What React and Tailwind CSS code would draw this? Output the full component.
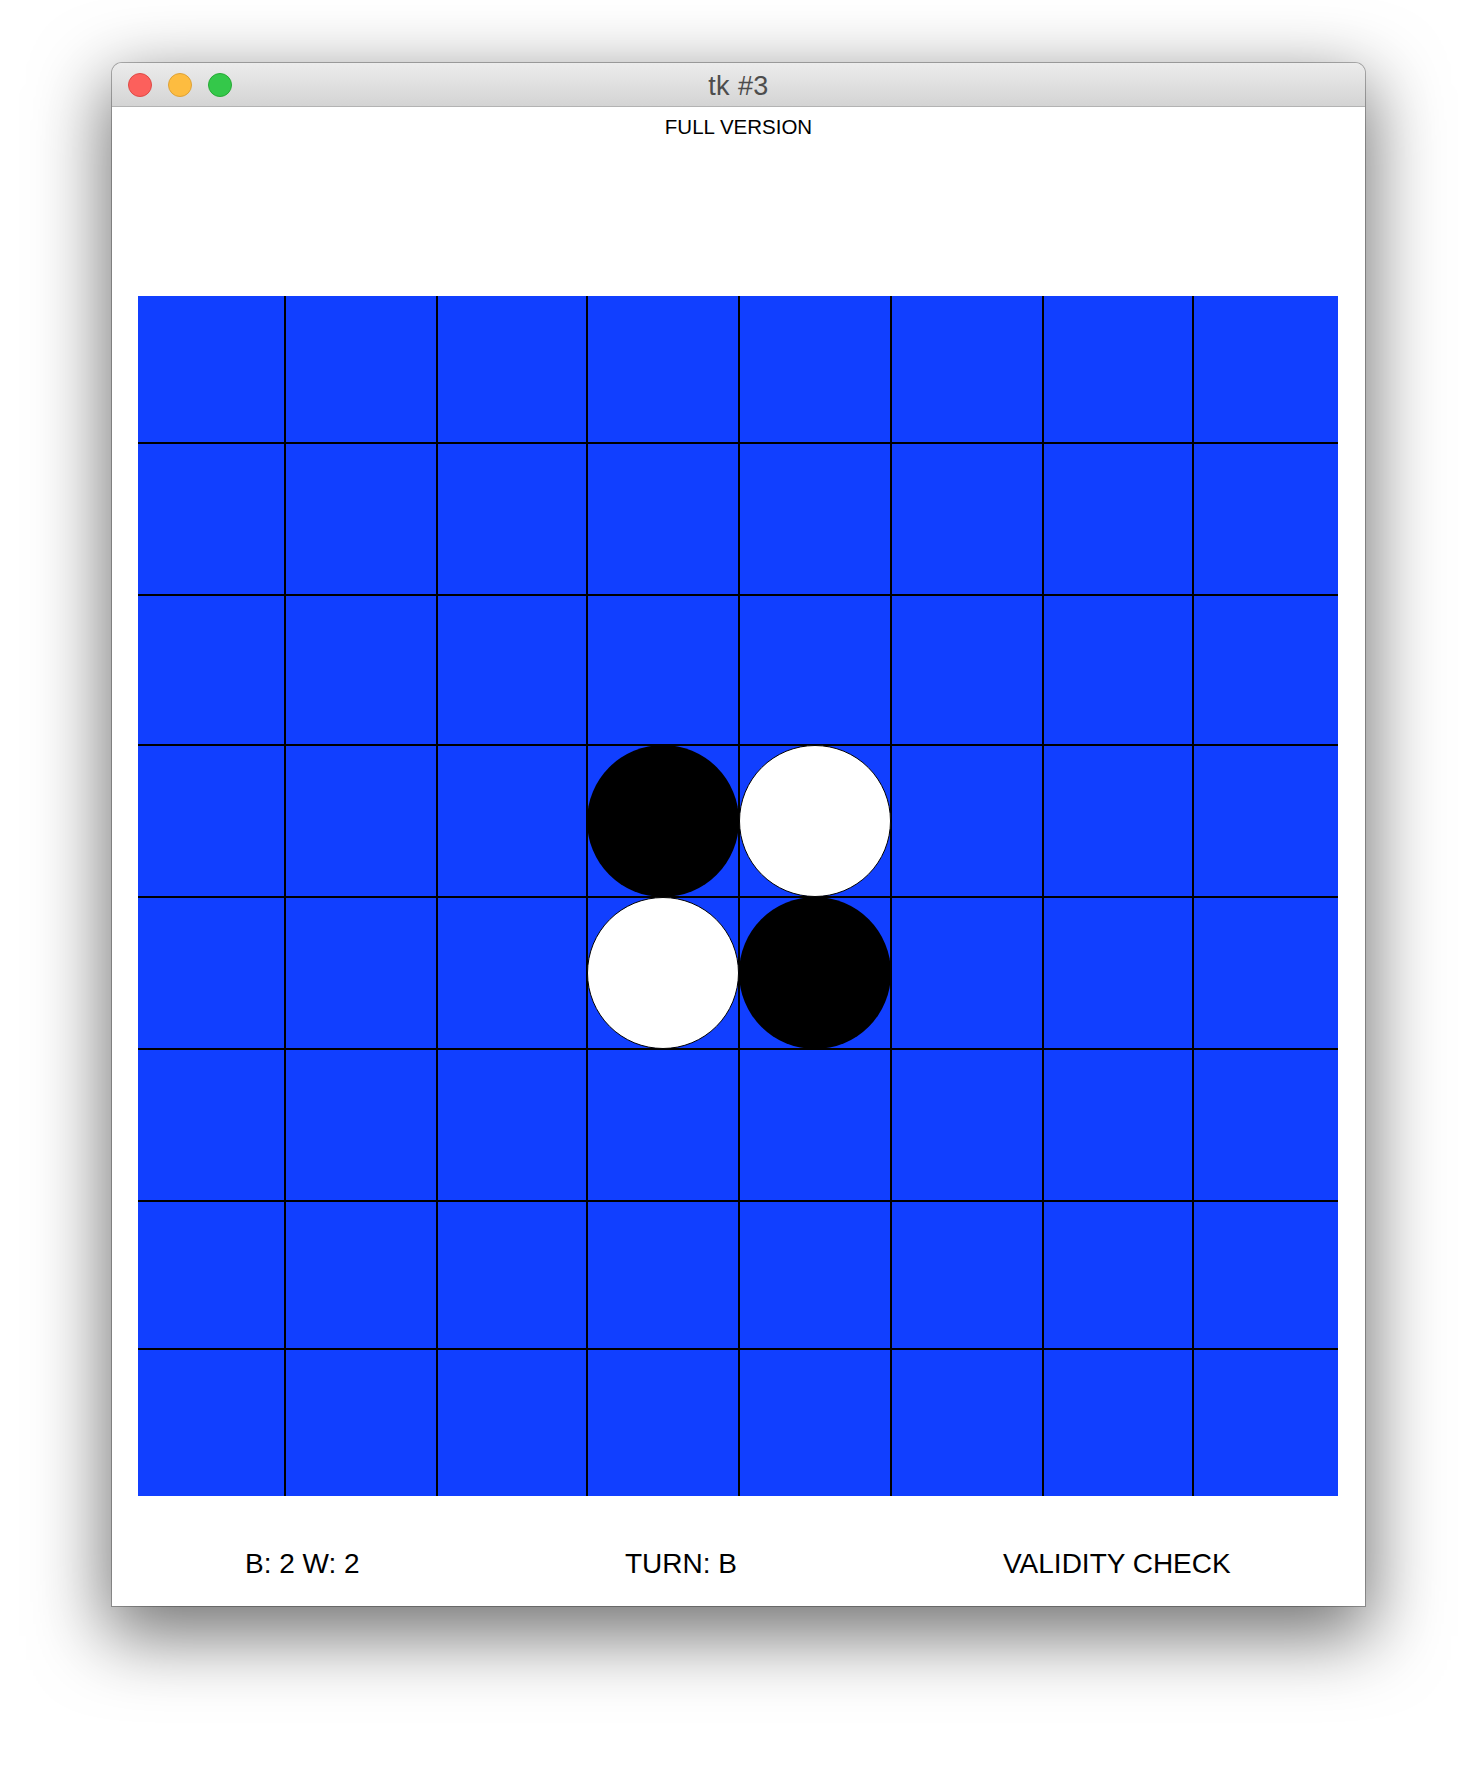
const cols = 8
const rows = 8

// starting position: row 3/4, col 3/4
const pieces = {
  '3-3': 'b',
  '3-4': 'w',
  '4-3': 'w',
  '4-4': 'b',
}

function Disc({ color }) {
  if (color === 'b') {
    return <div className="absolute inset-[-1px] rounded-full bg-black" />
  }
  return <div className="absolute inset-[-1px] rounded-full bg-white border-[1.5px] border-black" />
}

function Board() {
  const cells = []
  for (let r = 0; r < rows; r++) {
    for (let c = 0; c < cols; c++) {
      const p = pieces[`${r}-${c}`]
      cells.push(
        <div key={`${r}-${c}`} className="relative bg-[#113fff]">
          {p && <Disc color={p} />}
        </div>
      )
    }
  }
  return (
    <div className="ml-[26px] w-[1200px] h-[1200px] grid grid-cols-[146px_150px_148px_150px_150px_150px_148px_144px] grid-rows-[146px_150px_148px_150px_150px_150px_146px_146px] gap-[2px] bg-black">
      {cells}
    </div>
  )
}

export default function App() {
  return (
    <div className="w-[1476px] h-[1766px] bg-white pl-[112px] pt-[63px]" style={{ fontFamily: '"Liberation Sans", Arial, sans-serif' }}>
      <div className="w-[1253px] h-[1543px] bg-white rounded-t-[10px] shadow-[0_0_0_1px_rgba(0,0,0,0.28),0_24px_72px_6px_rgba(0,0,0,0.55)] flex flex-col">
        {/* title bar */}
        <div className="h-[44px] flex items-center rounded-t-[10px] bg-gradient-to-b from-[#ececec] to-[#d4d4d4] border-b border-[#b3b3b3]">
          <div className="w-[120px] flex items-center gap-4 pl-4 pt-[1px]">
            <span className="w-6 h-6 rounded-full bg-[#fc605c] border border-[#de4a46]" />
            <span className="w-6 h-6 rounded-full bg-[#fdbc40] border border-[#dea236]" />
            <span className="w-6 h-6 rounded-full bg-[#34c84a] border border-[#27aa35]" />
          </div>
          <div className="flex-1 text-center text-[27px] leading-[32px] pt-[3px] text-[#4d4d4d] tracking-[0.4px]">tk #3</div>
          <div className="w-[120px]" />
        </div>

        <div className="pt-2 text-center text-[20.5px] leading-[24px] text-black">FULL VERSION</div>

        <div className="mt-[157px]">
          <Board />
        </div>

        <div className="mt-[52px] flex pl-[133px] text-[28px] leading-[32px] text-black">
          <span className="w-[380px]">B: 2 W: 2</span>
          <span className="w-[378px]">TURN: B</span>
          <span>VALIDITY CHECK</span>
        </div>
      </div>
    </div>
  )
}
